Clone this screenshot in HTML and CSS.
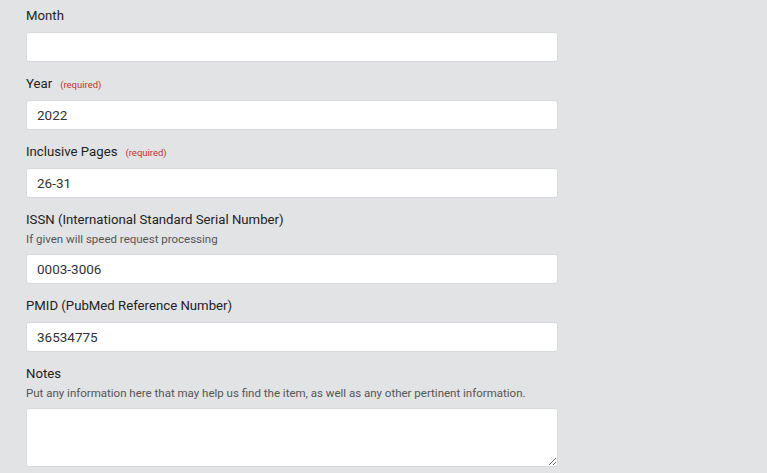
FILE: index.html
```html
<!DOCTYPE html>
<html lang="en">
<head>
<meta charset="utf-8">
<title>Request form</title>
<link rel="stylesheet" href="styles.css">
</head>
<body>
<form class="form">
  <div class="field">
    <label class="label" for="month">Month</label>
    <input class="input" id="month" type="text" value="">
  </div>
  <div class="field">
    <label class="label" for="year">Year <span class="req">(required)</span></label>
    <input class="input" id="year" type="text" value="2022">
  </div>
  <div class="field">
    <label class="label" for="pages">Inclusive Pages <span class="req">(required)</span></label>
    <input class="input" id="pages" type="text" value="26-31">
  </div>
  <div class="field">
    <label class="label label-tight" for="issn">ISSN (International Standard Serial Number)</label>
    <div class="help">If given will speed request processing</div>
    <input class="input" id="issn" type="text" value="0003-3006">
  </div>
  <div class="field">
    <label class="label" for="pmid">PMID (PubMed Reference Number)</label>
    <input class="input" id="pmid" type="text" value="36534775">
  </div>
  <div class="field">
    <label class="label label-tight" for="notes">Notes</label>
    <div class="help">Put any information here that may help us find the item, as well as any other pertinent information.</div>
    <textarea class="input textarea" id="notes"></textarea>
  </div>
</form>
</body>
</html>
```

FILE: styles.css
```css
html, body {
  margin: 0;
  padding: 0;
}
body {
  background: #e2e3e5;
  font-family: Roboto, "Liberation Sans", sans-serif;
  color: #222;
  height: 473px;
  overflow: hidden;
}
.form {
  display: flex;
  flex-direction: column;
  gap: 14px;
  padding: 8px 0 0 26px;
  width: 532px;
}
.field {
  display: flex;
  flex-direction: column;
}
.label {
  display: flex;
  align-items: baseline;
  gap: 8px;
  height: 16px;
  font-size: 13.2px;
  line-height: 16px;
  color: #222;
  margin-bottom: 8px;
}
.label-tight {
  margin-bottom: 4px;
}
.req {
  font-size: 9.5px;
  line-height: 16px;
  color: #c4312b;
}
.help {
  height: 14px;
  font-size: 11.5px;
  line-height: 14px;
  color: #555;
  margin-bottom: 8px;
  white-space: nowrap;
}
.input {
  box-sizing: border-box;
  width: 532px;
  height: 30px;
  margin: 0;
  padding: 0 10px;
  border: 1px solid #d7d9dc;
  border-radius: 3px;
  background: #fff;
  font-family: Roboto, "Liberation Sans", sans-serif;
  font-size: 13.5px;
  color: #333;
  outline: none;
}
.textarea {
  height: 59px;
  padding: 6px 10px;
  resize: vertical;
  display: block;
}
```
